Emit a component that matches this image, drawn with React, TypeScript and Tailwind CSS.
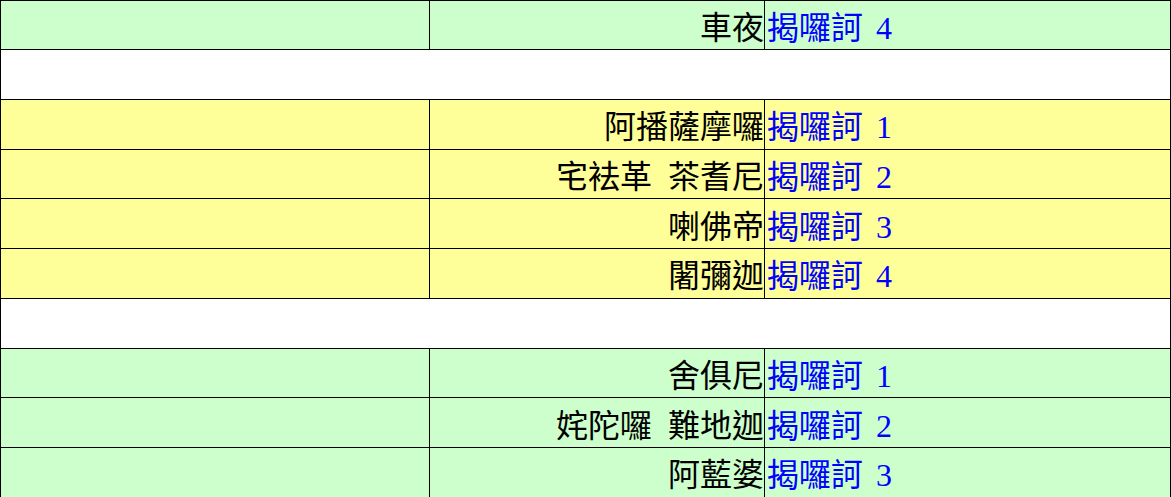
interface Row {
    name?: string;
    num?: number;
    color?: "green" | "yellow";
}

const rows: Row[] = [
    { name: "車夜", num: 4, color: "green" },
    {},
    { name: "阿播薩摩囉", num: 1, color: "yellow" },
    { name: "宅袪革  茶耆尼", num: 2, color: "yellow" },
    { name: "喇佛帝", num: 3, color: "yellow" },
    { name: "闍彌迦", num: 4, color: "yellow" },
    {},
    { name: "舍俱尼", num: 1, color: "green" },
    { name: "姹陀囉  難地迦", num: 2, color: "green" },
    { name: "阿藍婆", num: 3, color: "green" },
];

export default function App() {
    return (
        <div
            className="w-[1171px] h-[497px] overflow-hidden bg-white"
            style={{ fontFamily: '"Liberation Serif", "Noto Sans CJK TC", serif' }}
        >
            <div className="border-l border-black">
                {rows.map((row, i) =>
                    row.name ? (
                        <div
                            key={i}
                            className={`grid grid-cols-[429px_335px_406px] border-b border-black text-[32px] leading-none ${i === 0 ? "h-[50px] border-t" : "h-[49.75px]"} ${row.color === "green" ? "bg-[#ccffcc]" : "bg-[#ffff99]"}`}
                        >
                            <div className="border-r border-black"></div>
                            <div className="border-r border-black flex items-center justify-end pt-[6px] whitespace-pre text-black">
                                {row.name}
                            </div>
                            <div className="border-r border-black flex items-center pt-[6px] pl-[2px] whitespace-pre text-[#0000ff]">
                                揭囉訶 <span className="ml-[5px]">{row.num}</span>
                            </div>
                        </div>
                    ) : (
                        <div key={i} className="h-[49.75px] border-b border-r border-black bg-white"></div>
                    )
                )}
            </div>
        </div>
    );
}
